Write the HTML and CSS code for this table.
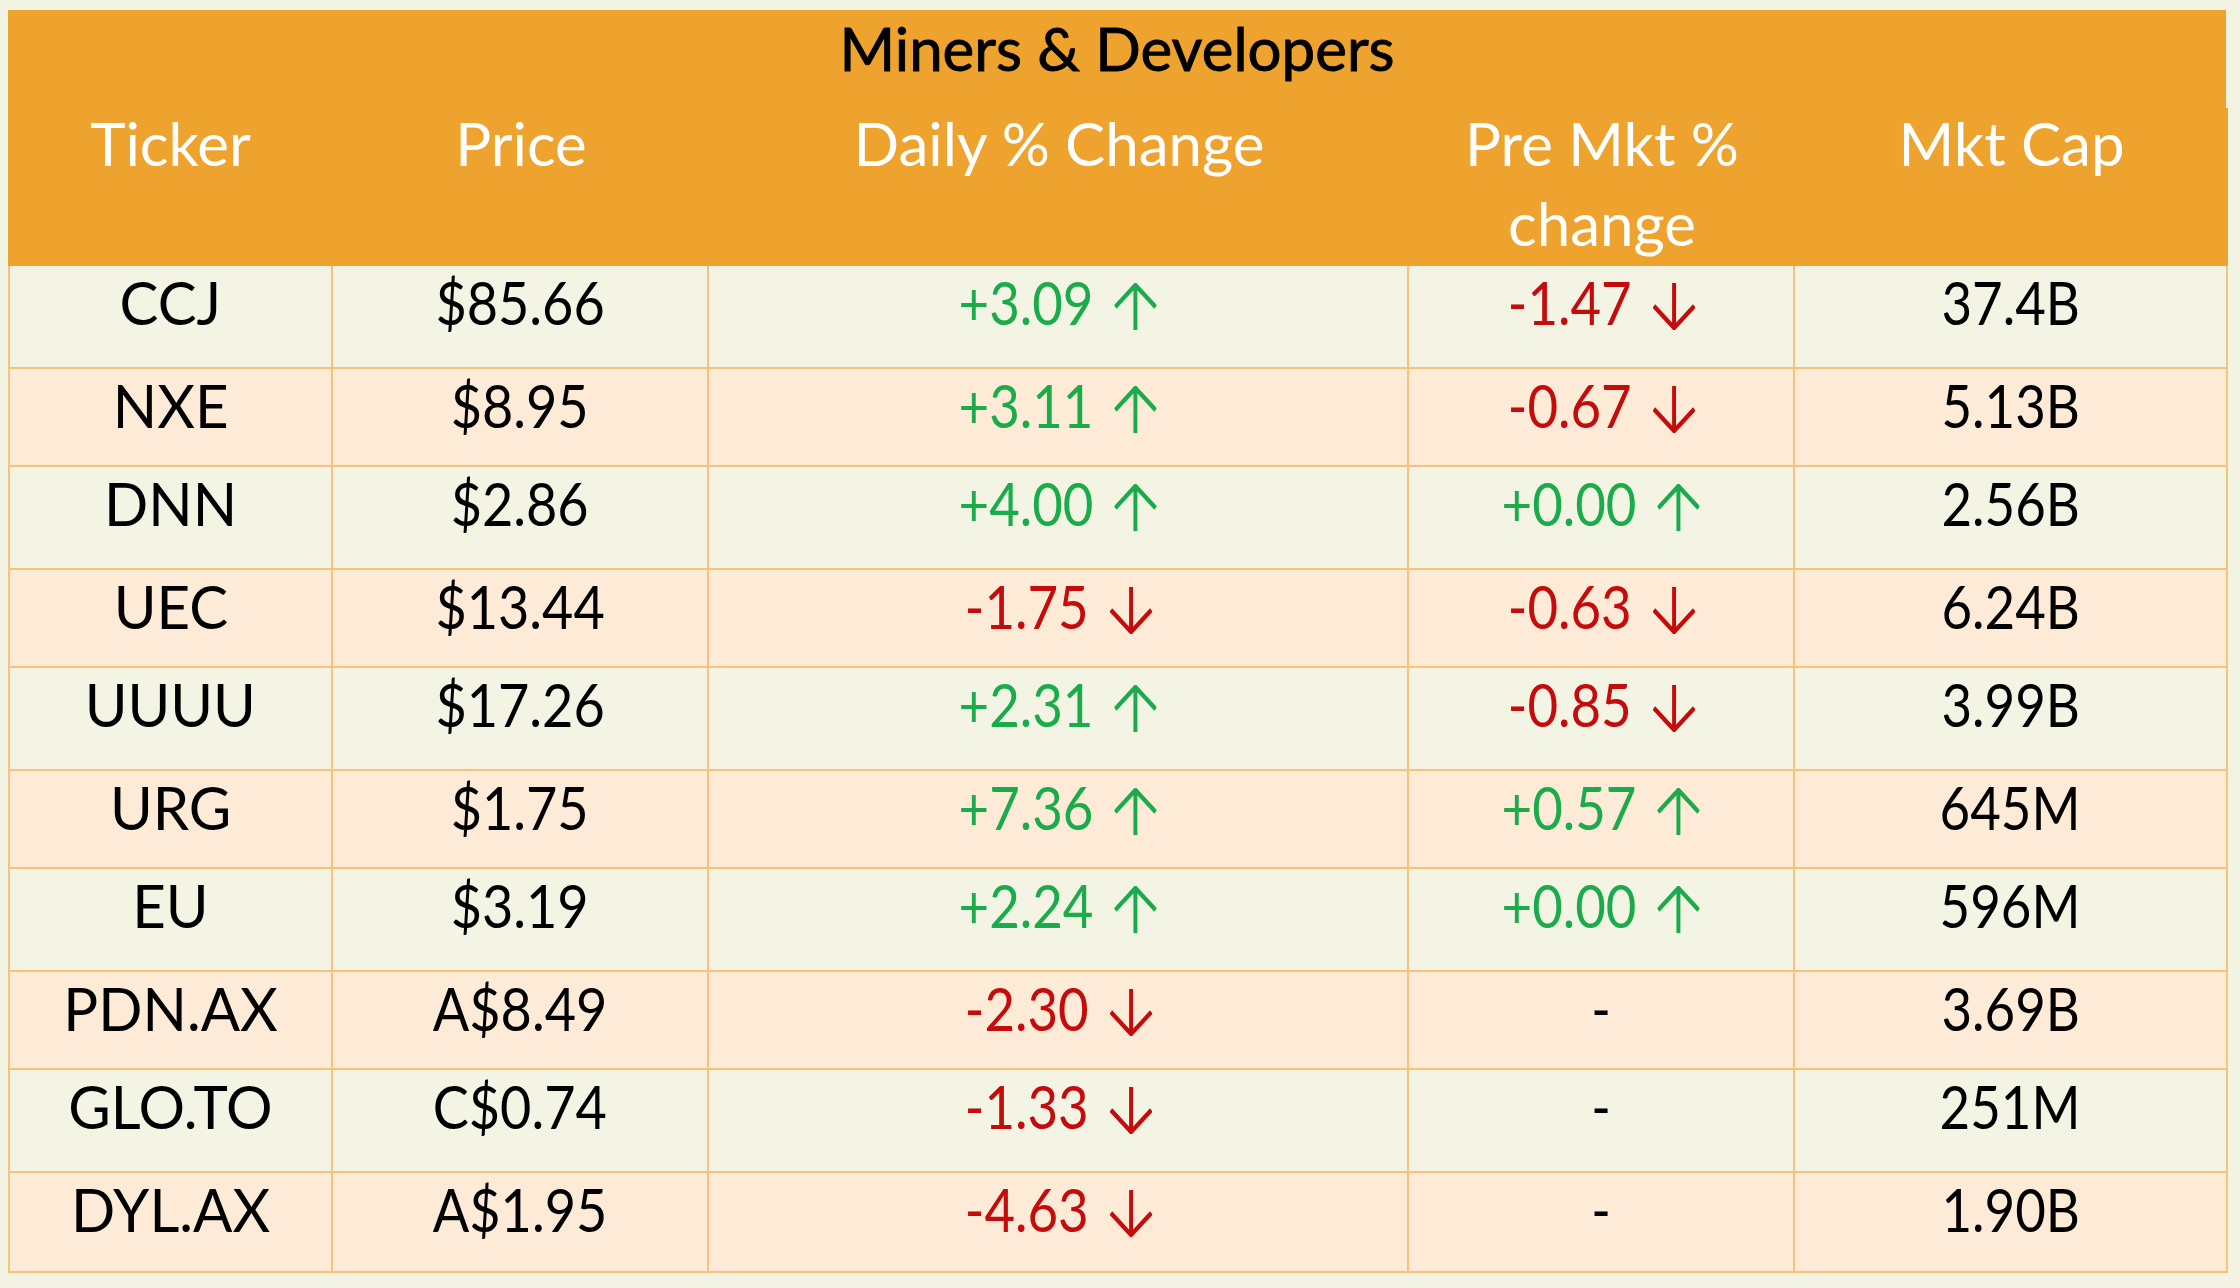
FILE: index.html
```html
<!DOCTYPE html>
<html lang="en">
<head>
<meta charset="utf-8">
<title>Miners &amp; Developers</title>
<link rel="stylesheet" href="styles.css">
</head>
<body>
<div class="sheet">
  <div class="title">Miners &amp; Developers</div>
  <div class="head">
    <div class="th"><div class="lbl">Ticker</div></div>
    <div class="th"><div class="lbl">Price</div></div>
    <div class="th"><div class="lbl">Daily % Change</div></div>
    <div class="th"><div class="lbl">Pre Mkt %<br>change</div></div>
    <div class="th"><div class="lbl">Mkt Cap</div></div>
  </div>

  <div class="row">
    <div class="cell"><span class="val">CCJ</span></div>
    <div class="cell"><span class="val">$85.66</span></div>
    <div class="cell"><span class="val up">+3.09<svg class="arr" viewBox="0 0 48 47"><path d="M24 47V2M1 24L24 2L47 24"/></svg></span></div>
    <div class="cell"><span class="val dn">-1.47<svg class="arr" viewBox="0 0 48 47"><path d="M24 0V45M1 23L24 45L47 23"/></svg></span></div>
    <div class="cell"><span class="val">37.4B</span></div>
  </div>
  <div class="row">
    <div class="cell"><span class="val">NXE</span></div>
    <div class="cell"><span class="val">$8.95</span></div>
    <div class="cell"><span class="val up">+3.11<svg class="arr" viewBox="0 0 48 47"><path d="M24 47V2M1 24L24 2L47 24"/></svg></span></div>
    <div class="cell"><span class="val dn">-0.67<svg class="arr" viewBox="0 0 48 47"><path d="M24 0V45M1 23L24 45L47 23"/></svg></span></div>
    <div class="cell"><span class="val">5.13B</span></div>
  </div>
  <div class="row">
    <div class="cell"><span class="val">DNN</span></div>
    <div class="cell"><span class="val">$2.86</span></div>
    <div class="cell"><span class="val up">+4.00<svg class="arr" viewBox="0 0 48 47"><path d="M24 47V2M1 24L24 2L47 24"/></svg></span></div>
    <div class="cell"><span class="val up">+0.00<svg class="arr" viewBox="0 0 48 47"><path d="M24 47V2M1 24L24 2L47 24"/></svg></span></div>
    <div class="cell"><span class="val">2.56B</span></div>
  </div>
  <div class="row">
    <div class="cell"><span class="val">UEC</span></div>
    <div class="cell"><span class="val">$13.44</span></div>
    <div class="cell"><span class="val dn">-1.75<svg class="arr" viewBox="0 0 48 47"><path d="M24 0V45M1 23L24 45L47 23"/></svg></span></div>
    <div class="cell"><span class="val dn">-0.63<svg class="arr" viewBox="0 0 48 47"><path d="M24 0V45M1 23L24 45L47 23"/></svg></span></div>
    <div class="cell"><span class="val">6.24B</span></div>
  </div>
  <div class="row">
    <div class="cell"><span class="val">UUUU</span></div>
    <div class="cell"><span class="val">$17.26</span></div>
    <div class="cell"><span class="val up">+2.31<svg class="arr" viewBox="0 0 48 47"><path d="M24 47V2M1 24L24 2L47 24"/></svg></span></div>
    <div class="cell"><span class="val dn">-0.85<svg class="arr" viewBox="0 0 48 47"><path d="M24 0V45M1 23L24 45L47 23"/></svg></span></div>
    <div class="cell"><span class="val">3.99B</span></div>
  </div>
  <div class="row">
    <div class="cell"><span class="val">URG</span></div>
    <div class="cell"><span class="val">$1.75</span></div>
    <div class="cell"><span class="val up">+7.36<svg class="arr" viewBox="0 0 48 47"><path d="M24 47V2M1 24L24 2L47 24"/></svg></span></div>
    <div class="cell"><span class="val up">+0.57<svg class="arr" viewBox="0 0 48 47"><path d="M24 47V2M1 24L24 2L47 24"/></svg></span></div>
    <div class="cell"><span class="val">645M</span></div>
  </div>
  <div class="row">
    <div class="cell"><span class="val">EU</span></div>
    <div class="cell"><span class="val">$3.19</span></div>
    <div class="cell"><span class="val up">+2.24<svg class="arr" viewBox="0 0 48 47"><path d="M24 47V2M1 24L24 2L47 24"/></svg></span></div>
    <div class="cell"><span class="val up">+0.00<svg class="arr" viewBox="0 0 48 47"><path d="M24 47V2M1 24L24 2L47 24"/></svg></span></div>
    <div class="cell"><span class="val">596M</span></div>
  </div>
  <div class="row">
    <div class="cell"><span class="val">PDN.AX</span></div>
    <div class="cell"><span class="val">A$8.49</span></div>
    <div class="cell"><span class="val dn">-2.30<svg class="arr" viewBox="0 0 48 47"><path d="M24 0V45M1 23L24 45L47 23"/></svg></span></div>
    <div class="cell"><span class="val">-</span></div>
    <div class="cell"><span class="val">3.69B</span></div>
  </div>
  <div class="row">
    <div class="cell"><span class="val">GLO.TO</span></div>
    <div class="cell"><span class="val">C$0.74</span></div>
    <div class="cell"><span class="val dn">-1.33<svg class="arr" viewBox="0 0 48 47"><path d="M24 0V45M1 23L24 45L47 23"/></svg></span></div>
    <div class="cell"><span class="val">-</span></div>
    <div class="cell"><span class="val">251M</span></div>
  </div>
  <div class="row">
    <div class="cell"><span class="val">DYL.AX</span></div>
    <div class="cell"><span class="val">A$1.95</span></div>
    <div class="cell"><span class="val dn">-4.63<svg class="arr" viewBox="0 0 48 47"><path d="M24 0V45M1 23L24 45L47 23"/></svg></span></div>
    <div class="cell"><span class="val">-</span></div>
    <div class="cell"><span class="val">1.90B</span></div>
  </div>
</div>
</body>
</html>
```

FILE: styles.css
```css
html, body {
  margin: 0;
  padding: 0;
  background: #f2f3e2;
}

body {
  font-family: "Lato", "Noto Sans", "Liberation Sans", sans-serif;
  font-size: 60px;
  color: #000;
}

.sheet {
  width: 2220px;
  margin: 10px 0 0 8px;
}

.title {
  height: 98px;
  box-sizing: border-box;
  padding-top: 2px;
  background: #efa32f;
  text-align: center;
  line-height: 72px;
  font-weight: 400;
  -webkit-text-stroke: 0.9px #000;
  margin-right: 2px;
}

.head,
.row {
  display: grid;
  grid-template-columns: 325px 376px 700px 386px 433px;
}

.head {
  height: 158px;
  background: #efa32f;
  color: #fff;
}

.th {
  text-align: center;
  line-height: 80px;
  white-space: nowrap;
}

.lbl {
  margin-top: -5px;
}

/* rows: cream rows are a little taller than peach rows */
.row {
  height: 103px;
  background: #f3f4e3;
}

.row:nth-child(even) {
  height: 98px;
  background: #fdebd7;
}

.row:last-child {
  height: 100px;
}

.cell {
  box-sizing: border-box;
  border-right: 2px solid #f5c37c;
  border-bottom: 2px solid #f5c37c;
  text-align: center;
  line-height: 72px;
  white-space: nowrap;
}

.cell:first-child {
  border-left: 2px solid #f5c37c;
}

.val {
  display: inline-block;
  transform: scaleX(0.88);
  transform-origin: center;
}

.cell:first-child .val {
  transform: scaleX(0.97);
}

.cell:nth-child(2) .val {
  transform: scaleX(0.9);
}

.up {
  color: #1aab4b;
}

.dn {
  color: #c40c0c;
}

.arr {
  width: 48px;
  height: 47px;
  margin-left: 24px;
  vertical-align: -5px;
  fill: none;
  stroke: currentColor;
  stroke-width: 4.5;
}
```
